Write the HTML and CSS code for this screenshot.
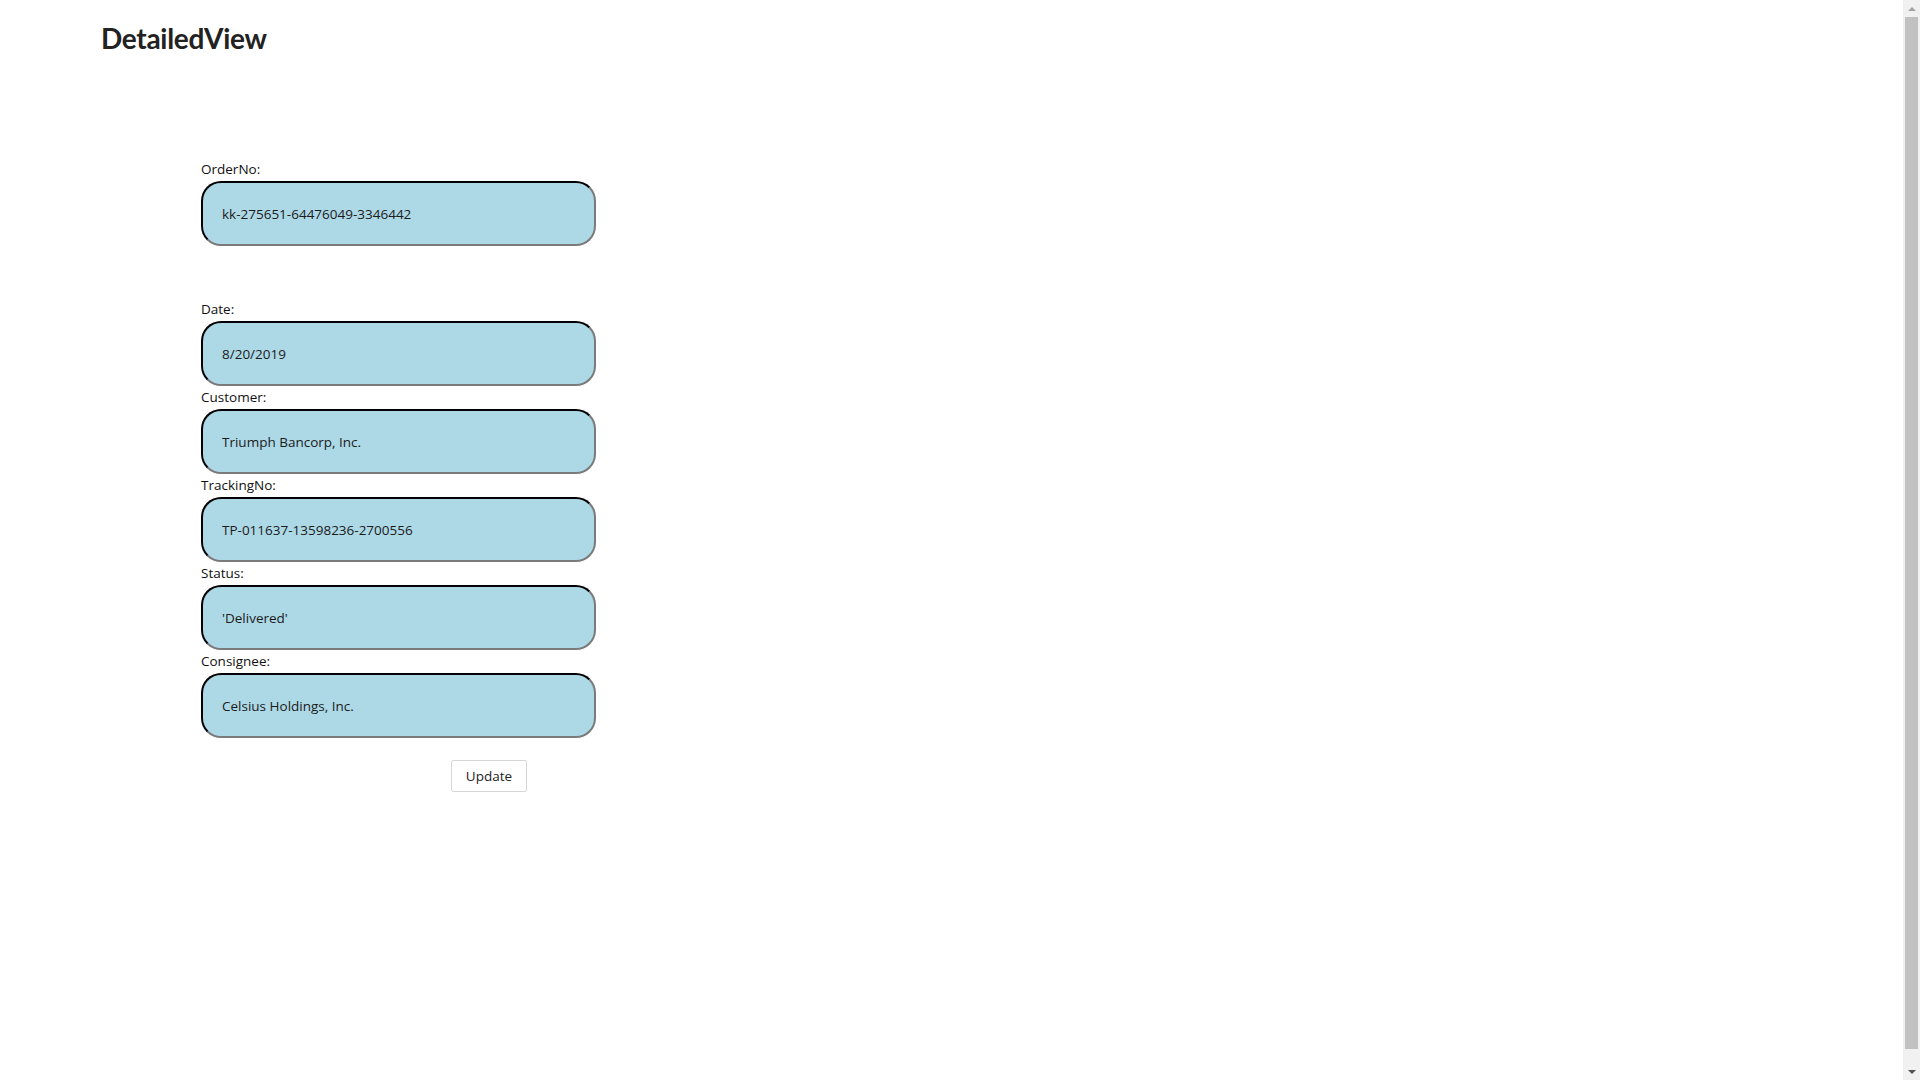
FILE: index.html
```html
<!DOCTYPE html>
<html lang="en">
<head>
<meta charset="utf-8">
<title>DetailedView</title>
<link rel="stylesheet" href="styles.css">
</head>
<body>
<div class="page">
  <header class="page-header">
    <h1 class="page-title">DetailedView</h1>
  </header>
  <main class="form">
    <div class="field field-first">
      <label class="field-label" for="orderNo">OrderNo:</label>
      <input class="field-input" id="orderNo" type="text" value="kk-275651-64476049-3346442">
    </div>
    <div class="field">
      <label class="field-label" for="date">Date:</label>
      <input class="field-input" id="date" type="text" value="8/20/2019">
    </div>
    <div class="field">
      <label class="field-label" for="customer">Customer:</label>
      <input class="field-input" id="customer" type="text" value="Triumph Bancorp, Inc.">
    </div>
    <div class="field">
      <label class="field-label" for="trackingNo">TrackingNo:</label>
      <input class="field-input" id="trackingNo" type="text" value="TP-011637-13598236-2700556">
    </div>
    <div class="field">
      <label class="field-label" for="status">Status:</label>
      <input class="field-input" id="status" type="text" value="'Delivered'">
    </div>
    <div class="field">
      <label class="field-label" for="consignee">Consignee:</label>
      <input class="field-input" id="consignee" type="text" value="Celsius Holdings, Inc.">
    </div>
    <div class="actions">
      <button class="btn" type="button">Update</button>
    </div>
  </main>
</div>
<div class="scrollbar" aria-hidden="true">
  <span class="scroll-arrow scroll-up"></span>
  <span class="scroll-thumb"></span>
  <span class="scroll-arrow scroll-down"></span>
</div>
</body>
</html>
```

FILE: styles.css
```css
html, body {
  margin: 0;
  padding: 0;
  background: #ffffff;
  overflow: hidden;
}

body {
  font-family: "Open Sans", "Noto Sans", Arial, sans-serif;
  color: #212121;
}

.page {
  box-sizing: border-box;
  padding: 0 0 0 101px;
}

.page-header {
  padding-top: 17px;
}

.page-title {
  margin: 0;
  font-family: Lato, "Open Sans", sans-serif;
  font-size: 28px;
  font-weight: 700;
  letter-spacing: -0.3px;
  line-height: 42px;
  color: #222222;
}

.form {
  display: flex;
  flex-direction: column;
  padding-left: 100px;
  padding-top: 101px;
  width: 395px;
}

.field {
  display: flex;
  flex-direction: column;
  margin-bottom: 2px;
}

.field-first {
  margin-bottom: 54px;
}

.field-label {
  font-size: 13.5px;
  line-height: 18px;
  margin-bottom: 3px;
  color: #111111;
}

.field-input {
  box-sizing: border-box;
  width: 395px;
  height: 65px;
  padding: 0 0 0 19px;
  border: 2px inset #767676;
  border-top-color: #1f1f1f;
  border-left-color: #1f1f1f;
  border-right-color: #7a7a7a;
  border-bottom-color: #7a7a7a;
  border-radius: 20px;
  background: #add8e6;
  font-family: "Open Sans", "Noto Sans", Arial, sans-serif;
  font-size: 13.5px;
  color: #1b1b1b;
  outline: none;
}

.actions {
  padding-top: 20px;
  padding-left: 250px;
}

.btn {
  box-sizing: border-box;
  width: 76px;
  height: 32px;
  background: #ffffff;
  border: 1px solid #d6d6d6;
  border-radius: 2px;
  font-family: "Open Sans", "Noto Sans", Arial, sans-serif;
  font-size: 13.5px;
  color: #222222;
  padding: 0;
}

.scrollbar {
  position: fixed;
  top: 0;
  right: 0;
  width: 17px;
  height: 100%;
  background: #f1f1f1;
  display: flex;
  flex-direction: column;
  align-items: center;
}

.scroll-arrow {
  display: flex;
  height: 17px;
  width: 17px;
  align-items: center;
  justify-content: center;
}

.scroll-up::before,
.scroll-down::before {
  content: "";
  width: 0;
  height: 0;
  border-left: 4px solid transparent;
  border-right: 4px solid transparent;
}

.scroll-up::before {
  border-bottom: 4px solid #a3a3a3;
}

.scroll-down::before {
  border-top: 4px solid #505050;
}

.scroll-thumb {
  flex: 1;
  width: 13px;
  margin: 0 0 14px;
  background: #c1c1c1;
}
```
